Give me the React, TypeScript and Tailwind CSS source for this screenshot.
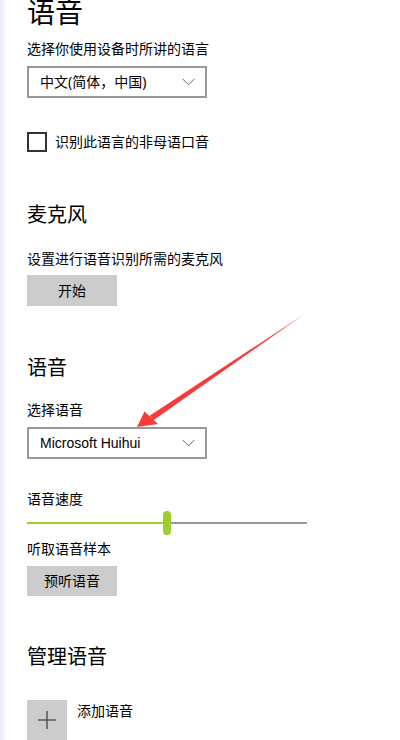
import React from "react";

const font = { fontFamily: '"Noto Sans", "Noto Sans CJK SC", sans-serif' };

function Chevron() {
  return (
    <svg width="13" height="8" viewBox="0 0 13 8" className="shrink-0">
      <path d="M0.5 0.8 L6.5 6.8 L12.5 0.8" fill="none" stroke="#666" strokeWidth="1" />
    </svg>
  );
}

function Dropdown({ label, latin }: { label: string; latin?: boolean }) {
  return (
    <div className="w-[180px] h-[32px] border-2 border-[#999] flex items-center justify-between pl-[11px] pr-[10px] text-[14px] text-black">
      <span
        className="leading-none"
        style={latin ? { fontFamily: '"Liberation Sans", "Noto Sans CJK SC", sans-serif' } : undefined}
      >
        {label}
      </span>
      <Chevron />
    </div>
  );
}

export default function App() {
  return (
    <div className="w-[400px] h-[740px] bg-white relative overflow-hidden flex" style={font}>
      <div className="w-[5px] h-full bg-gradient-to-r from-[#e9eef4] to-[#f5f7fa]" />
      <div className="flex flex-col pl-[22px] text-black">
        <div className="h-[32px] text-[28px] leading-[32px] -mt-[4px]">语音</div>
        <div className="h-[20px] text-[14px] leading-[20px] mt-[11px]">选择你使用设备时所讲的语言</div>
        <div className="mt-[7px]">
          <Dropdown label="中文(简体，中国)" />
        </div>
        <div className="mt-[34px] h-[20px] flex items-center gap-[8px]">
          <div className="w-[20px] h-[20px] border-2 border-[#333]" />
          <span className="text-[14px] leading-[20px]">识别此语言的非母语口音</span>
        </div>
        <div className="mt-[49px] h-[28px] text-[20px] leading-[28px]">麦克风</div>
        <div className="mt-[20px] h-[20px] text-[14px] leading-[20px]">设置进行语音识别所需的麦克风</div>
        <div className="mt-[6px] w-[90px] h-[31px] bg-[#cccccc] flex items-center justify-center text-[14px]">开始</div>
        <div className="mt-[48px] h-[28px] text-[20px] leading-[28px]">语音</div>
        <div className="mt-[18px] h-[20px] text-[14px] leading-[20px]">选择语音</div>
        <div className="mt-[7px]">
          <Dropdown label="Microsoft Huihui" latin />
        </div>
        <div className="mt-[30px] h-[20px] text-[14px] leading-[20px]">语音速度</div>
        <div className="mt-[2px] w-[280px] h-[24px] flex items-center">
          <div className="w-[136px] h-[2px] bg-[#9fcd2a]" />
          <div className="w-[8px] h-[24px] rounded-full bg-[#9fcd2a]" />
          <div className="flex-1 h-[2px] bg-[#999]" />
        </div>
        <div className="mt-[4px] h-[20px] text-[14px] leading-[20px]">听取语音样本</div>
        <div className="mt-[7px] w-[90px] h-[31px] bg-[#cccccc] flex items-center justify-center text-[14px]">预听语音</div>
        <div className="mt-[47px] h-[28px] text-[20px] leading-[28px]">管理语音</div>
        <div className="mt-[29px] flex gap-[10px]">
          <div className="w-[40px] h-[40px] bg-[#cccccc] flex items-center justify-center">
            <svg width="18" height="18" viewBox="0 0 18 18">
              <path d="M9 0 V18 M0 9 H18" stroke="#555" strokeWidth="1.5" />
            </svg>
          </div>
          <div className="text-[14px] leading-[20px] mt-[1px]">添加语音</div>
        </div>
      </div>
      <svg className="absolute top-0 left-0 pointer-events-none" width="400" height="740" viewBox="0 0 400 740">
        <polygon points="303,315 153.4,420.3 149.6,415.7" fill="#f73b3b" />
        <polygon points="137,427 144.5,411.5 158,424" fill="#f73b3b" />
      </svg>
    </div>
  );
}
